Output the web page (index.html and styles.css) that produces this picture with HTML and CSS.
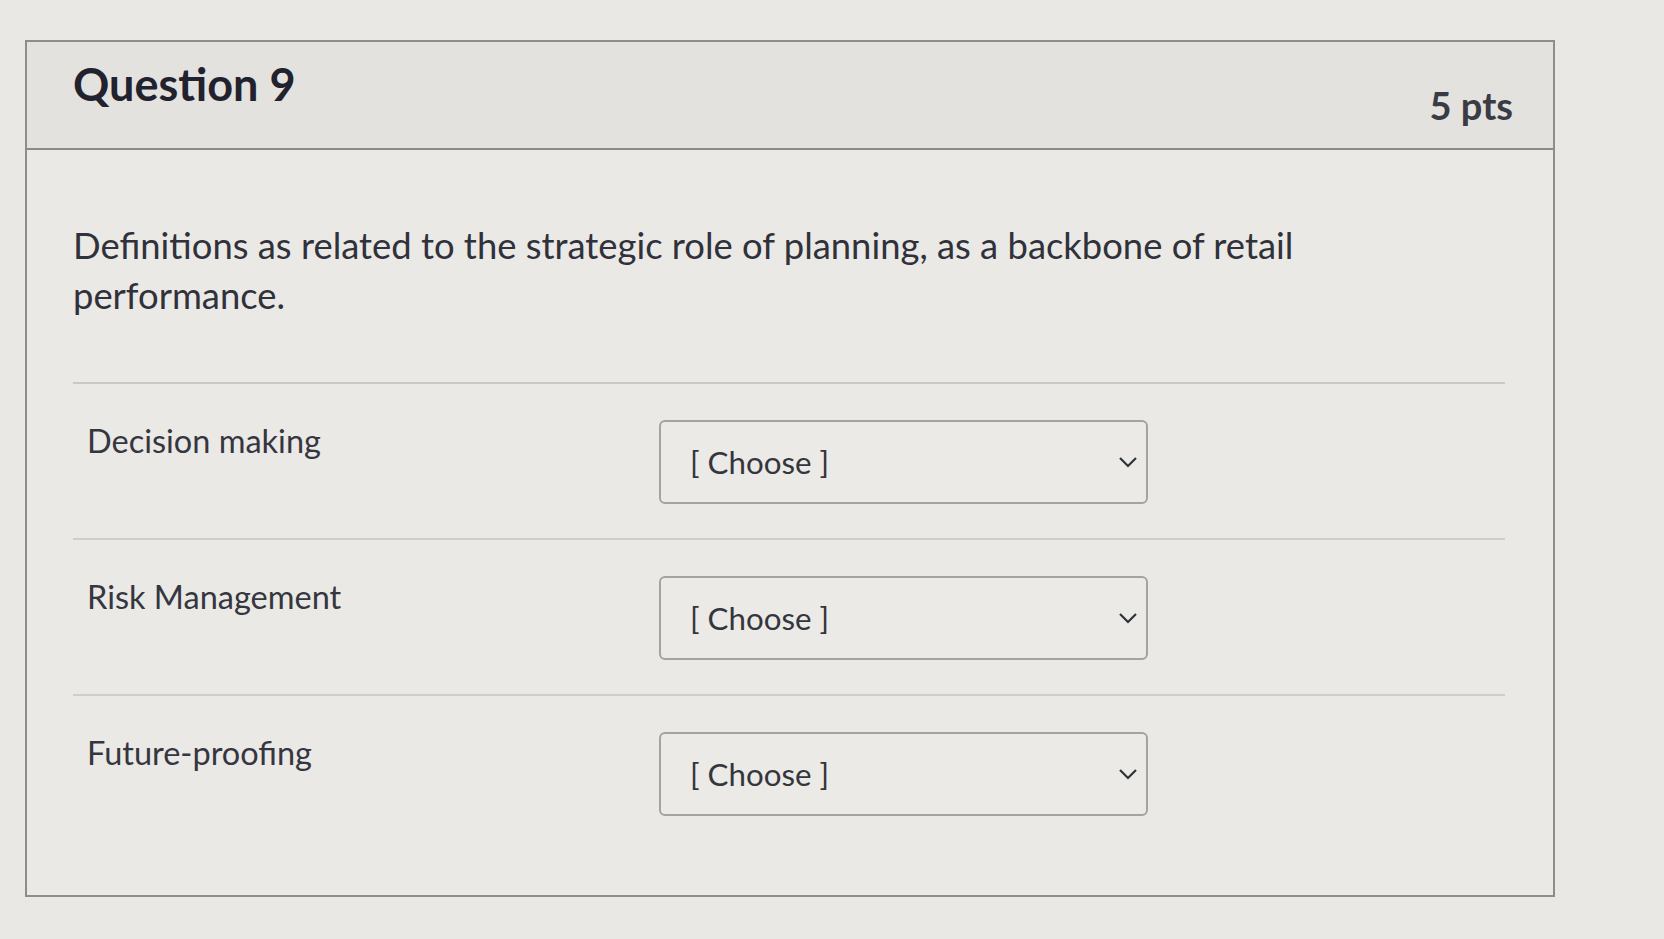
FILE: index.html
```html
<!DOCTYPE html>
<html>
<head>
<meta charset="utf-8">
<link rel="stylesheet" href="styles.css">
</head>
<body>
<div class="page">
  <div class="card">
    <div class="card-header">
      <h2 class="q-title">Question 9</h2>
      <div class="q-points">5 pts</div>
    </div>
    <div class="card-body">
      <p class="q-text">Definitions as related to the strategic role of planning, as a backbone of retail performance.</p>
      <div class="answers">
        <div class="answer-row">
          <div class="answer-label">Decision making</div>
          <div class="select-box"><span class="select-text">[ Choose ]</span><svg class="chev" viewBox="0 0 20 12" width="20" height="12"><path d="M2 2 L10 10 L18 2" fill="none" stroke="#2f3338" stroke-width="2.2"/></svg></div>
        </div>
        <div class="answer-row">
          <div class="answer-label">Risk Management</div>
          <div class="select-box"><span class="select-text">[ Choose ]</span><svg class="chev" viewBox="0 0 20 12" width="20" height="12"><path d="M2 2 L10 10 L18 2" fill="none" stroke="#2f3338" stroke-width="2.2"/></svg></div>
        </div>
        <div class="answer-row">
          <div class="answer-label">Future-proofing</div>
          <div class="select-box"><span class="select-text">[ Choose ]</span><svg class="chev" viewBox="0 0 20 12" width="20" height="12"><path d="M2 2 L10 10 L18 2" fill="none" stroke="#2f3338" stroke-width="2.2"/></svg></div>
        </div>
      </div>
    </div>
  </div>
</div>
</body>
</html>
```
FILE: styles.css
```css
html, body {
  margin: 0;
  padding: 0;
  background: #e9e8e4;
  font-family: Lato, "Noto Sans", "Liberation Sans", sans-serif;
}

.page {
  width: 1664px;
  height: 939px;
  padding: 40px 0 0 25px;
  box-sizing: border-box;
}

.card {
  width: 1530px;
  height: 857px;
  box-sizing: border-box;
  border: 2px solid #8d8d8c;
  background: #eae9e5;
  display: flex;
  flex-direction: column;
}

.card-header {
  height: 108px;
  box-sizing: border-box;
  background: #e3e2de;
  border-bottom: 2px solid #8a8a89;
  display: flex;
  justify-content: space-between;
  align-items: flex-start;
  padding: 0 40px 0 46px;
}

.q-title {
  margin: 14px 0 0 0;
  font-size: 45px;
  font-weight: 700;
  color: #22222f;
  line-height: 56px;
}

.q-points {
  margin-top: 39px;
  font-size: 38px;
  font-weight: 700;
  color: #3a3b44;
  line-height: 48px;
}

.card-body {
  padding: 70px 48px 0 46px;
}

.q-text {
  margin: 0;
  font-size: 36.4px;
  line-height: 50px;
  color: #30313b;
  width: 1260px;
}

.answers {
  margin-top: 62px;
  border-top: 2px solid #c9c8c4;
}

.answer-row {
  display: grid;
  grid-template-columns: 572px 489px;
  padding: 36px 0 34px 14px;
  border-bottom: 2px solid #cfcec9;
}

.answer-row:last-child {
  border-bottom: none;
}

.answer-label {
  font-size: 32.5px;
  line-height: 40px;
  color: #35363f;
  margin-top: 1px;
}

.select-box {
  height: 84px;
  box-sizing: border-box;
  border: 2px solid #a3a3a2;
  border-radius: 6px;
  background: #eceae6;
  display: flex;
  align-items: center;
  justify-content: space-between;
  padding: 0 8px 0 29px;
}

.select-text {
  font-size: 31.3px;
  color: #34363d;
}

.chev {
  display: block;
}
```
